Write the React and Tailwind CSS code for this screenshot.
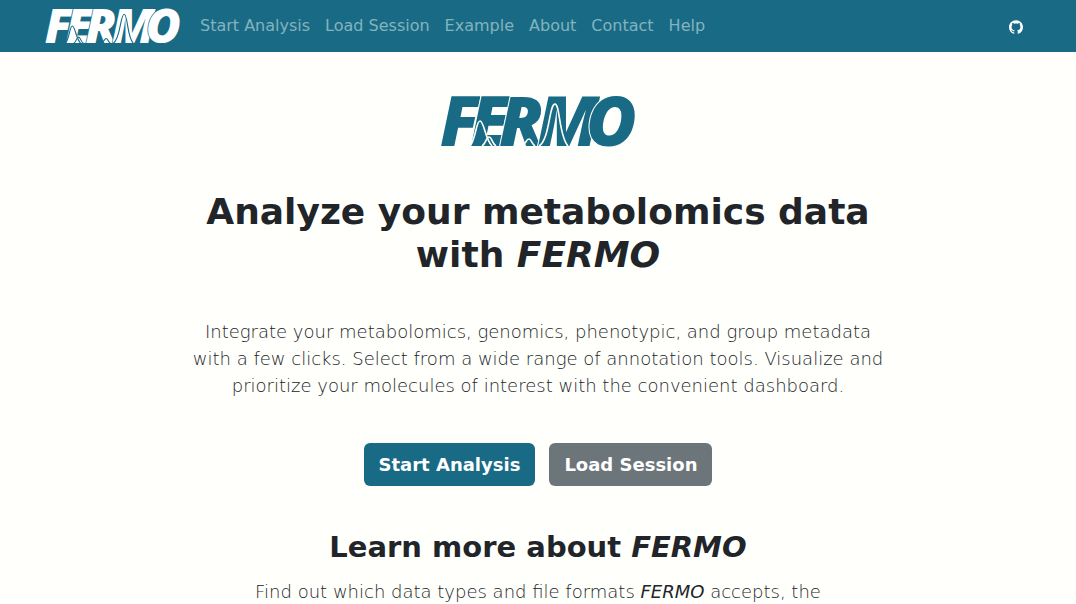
import { SiGithub } from "react-icons/si";

const links = ["Start Analysis", "Load Session", "Example", "About", "Contact", "Help"];

function Logo({ className, peaks }) {
  return (
    <svg viewBox="0 0 194 52" className={className} role="img" aria-label="FERMO">
      <text
        x="-1 29 58 96 145"
        y="51"
        fill="currentColor"
        paintOrder="stroke"
        strokeWidth="2"
        className={`font-[Open_Sans,sans-serif] text-[69px] font-extrabold italic ${peaks}`}
      >
        FERMO
      </text>
      <g fill="none" strokeWidth="1.6" className={peaks}>
        <path d="M29 51 C35 44 35 26 39 26 C43 26 44 44 51 51" />
        <path d="M41 51 C45 49 45 42 48 42 C51 42 51 49 55 51" />
        <path d="M81 51 C85 49 85 44 88 44 C90 44 91 49 94 51" />
        <path d="M98 51 C109 44 108 9 114 9 C119 9 118 42 127 51" />
      </g>
    </svg>
  );
}

export default function App() {
  return (
    <div className="min-h-screen bg-[#fffffc] font-['DejaVu_Sans',sans-serif] text-[#212529]">
      <nav className="flex min-h-13 items-center bg-[#196b85] pr-[53px] pl-[45px] text-white">
        <a href="#home" className="mr-5">
          <Logo className="h-9 w-[135px] overflow-visible" peaks="stroke-[#196b85]" />
        </a>
        <ul className="flex gap-[15px] text-base text-[#83b3bf]">
          {links.map((label) => (
            <li key={label}>
              <a href="#nav">{label}</a>
            </li>
          ))}
        </ul>
        <a href="#github" aria-label="GitHub" className="mt-[2px] ml-auto">
          <SiGithub className="size-[14px]" />
        </a>
      </nav>
      <main className="flex flex-col items-center text-center">
        <Logo
          className="mt-[43px] h-[52px] w-[194px] overflow-visible text-[#196b85]"
          peaks="stroke-[#fffffc]"
        />
        <section className="w-2/3 px-3">
          <h1 className="mt-[43px] text-4xl leading-[43px] font-bold">
            Analyze your metabolomics data with <em>FERMO</em>
          </h1>
          <p className="mt-[42px] text-lg leading-[27px] font-light">
            Integrate your metabolomics, genomics, phenotypic, and group metadata with a few clicks. Select from a wide
            range of annotation tools. Visualize and prioritize your molecules of interest with the convenient
            dashboard.
          </p>
          <div className="mt-11 flex justify-center gap-[14px] text-lg leading-[27px] font-bold text-white">
            <button className="rounded-md bg-[#196b85] px-[15px] py-2">Start Analysis</button>
            <button className="rounded-md bg-[#6c757a] px-[15px] py-2">Load Session</button>
          </div>
        </section>
        <section className="w-7/12 px-3">
          <h2 className="mt-11 text-[29px] leading-[34px] font-bold">
            Learn more about <em>FERMO</em>
          </h2>
          <p className="mt-[14px] text-lg leading-[27px] font-light">
            Find out which data types and file formats <em className="font-normal">FERMO</em> accepts, the
          </p>
        </section>
      </main>
    </div>
  );
}
